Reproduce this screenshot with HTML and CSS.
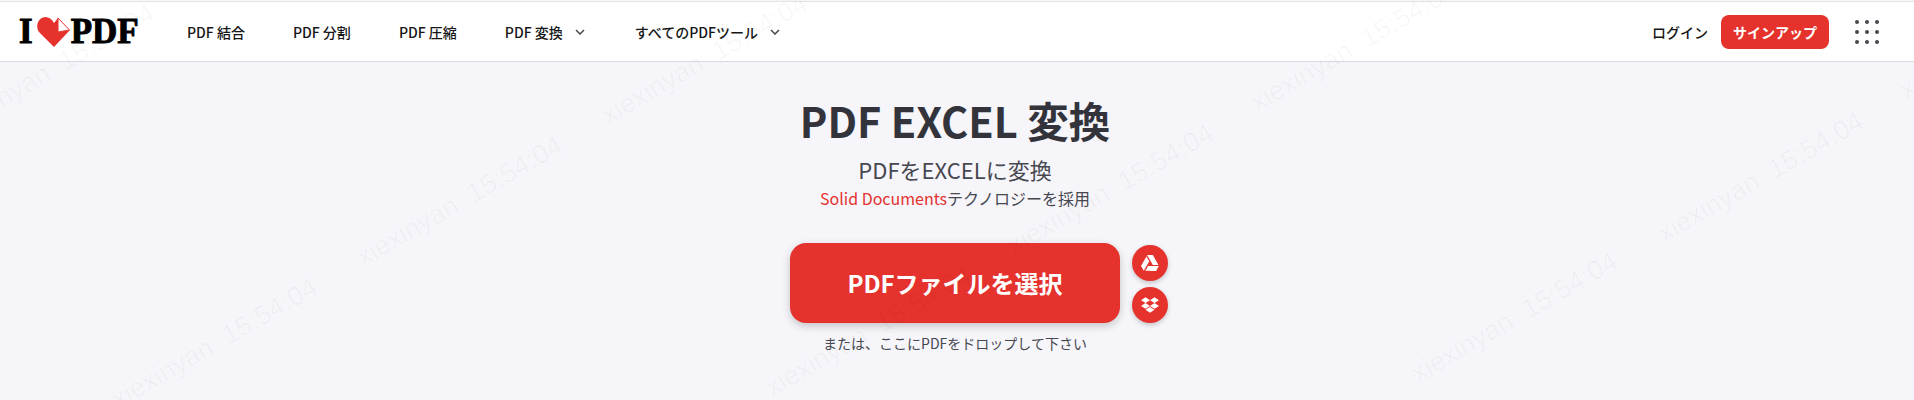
FILE: index.html
```html
<!DOCTYPE html>
<html lang="ja">
<head>
    <meta charset="UTF-8">
    <meta name="viewport" content="width=device-width, initial-scale=1.0">
    <title>PDF EXCEL 変換</title>
    <link rel="stylesheet" href="styles.css">
</head>
<body>
    <header class="topbar">
        <a class="logo" href="#">
            <span>I</span>
            <svg class="logo-heart" viewBox="0 0 33 30" width="33" height="30">
                <path fill="#e5322d" d="M17 30 L2 15 C-2 9 1 1 8 0 C12 0 15 2 17 6 L21 1 L21 15 L33 13 Z"/>
                <path fill="#fff" stroke="#e5322d" stroke-width="1" d="M21 1 L32.5 13 L21 15 Z"/>
            </svg>
            <span>PDF</span>
        </a>
        <nav class="main-nav">
            <a href="#">PDF 結合</a>
            <a href="#">PDF 分割</a>
            <a href="#">PDF 圧縮</a>
            <a href="#" class="has-menu">PDF 変換
                <svg class="chevron" viewBox="0 0 10 6" width="10" height="6"><path d="M1 1l4 4 4-4" fill="none" stroke="#47474f" stroke-width="1.5"/></svg>
            </a>
            <a href="#" class="has-menu">すべてのPDFツール
                <svg class="chevron" viewBox="0 0 10 6" width="10" height="6"><path d="M1 1l4 4 4-4" fill="none" stroke="#47474f" stroke-width="1.5"/></svg>
            </a>
        </nav>
        <div class="account">
            <a href="#" class="login">ログイン</a>
            <a href="#" class="signup">サインアップ</a>
            <div class="apps">
                <i></i><i></i><i></i>
                <i></i><i></i><i></i>
                <i></i><i></i><i></i>
            </div>
        </div>
    </header>

    <main class="tool">
        <h1>PDF EXCEL 変換</h1>
        <h2>PDFをEXCELに変換</h2>
        <p class="powered"><span class="brand">Solid Documents</span>テクノロジーを採用</p>
        <div class="uploader">
            <a href="#" class="pick-btn">PDFファイルを選択</a>
            <div class="cloud-btns">
                <a href="#" class="cloud-btn">
                    <svg viewBox="0 0 24 24" width="18" height="18"><path fill="#fff" d="M12.01 1.485c-2.082 0-3.754.02-3.743.047.01.02 1.708 3.001 3.774 6.62l3.76 6.574h3.76c2.081 0 3.753-.02 3.742-.047-.005-.02-1.708-3.001-3.775-6.62l-3.76-6.574zm-4.76 1.73a789.828 789.861 0 0 0-3.63 6.319L0 15.868l1.89 3.298 1.885 3.297 3.62-6.335 3.618-6.33-1.88-3.287C8.1 4.704 7.255 3.22 7.25 3.214zm2.259 12.653-.203.348c-.114.198-.96 1.672-1.88 3.287a423.93 423.948 0 0 1-1.698 2.97c-.01.026 3.24.042 7.222.042h7.244l1.796-3.157c.992-1.734 1.85-3.23 1.906-3.323l.104-.167h-7.249z"/></svg>
                </a>
                <a href="#" class="cloud-btn">
                    <svg viewBox="0 0 24 24" width="18" height="18"><path fill="#fff" d="M6 1.807L0 5.629l6 3.822 6.001-3.822L6 1.807zM18 1.807l-6 3.822 6 3.822 6-3.822-6-3.822zM0 13.274l6 3.822 6.001-3.822L6 9.452l-6 3.822zM18 9.452l-6 3.822 6 3.822 6-3.822-6-3.822zM6 18.371l6.001 3.822 6-3.822-6-3.822L6 18.371z"/></svg>
                </a>
            </div>
        </div>
        <p class="drop-hint">または、ここにPDFをドロップして下さい</p>
    </main>

    <!-- watermark lies over the whole page -->
    <svg class="watermark" width="1914" height="400">
        <text x="-45" y="135" transform="rotate(-30 -45 135)">xiexinyan&#160;&#160;15:54:04</text>
        <text x="118" y="409" transform="rotate(-30 118 409)">xiexinyan&#160;&#160;15:54:04</text>
        <text x="363" y="267" transform="rotate(-30 363 267)">xiexinyan&#160;&#160;15:54:04</text>
        <text x="608" y="125" transform="rotate(-30 608 125)">xiexinyan&#160;&#160;15:54:04</text>
        <text x="772" y="397" transform="rotate(-30 772 397)">xiexinyan&#160;&#160;15:54:04</text>
        <text x="1014" y="255" transform="rotate(-30 1014 255)">xiexinyan&#160;&#160;15:54:04</text>
        <text x="1257" y="112" transform="rotate(-30 1257 112)">xiexinyan&#160;&#160;15:54:04</text>
        <text x="1418" y="383" transform="rotate(-30 1418 383)">xiexinyan&#160;&#160;15:54:04</text>
        <text x="1664" y="243" transform="rotate(-30 1664 243)">xiexinyan&#160;&#160;15:54:04</text>
        <text x="1906" y="100" transform="rotate(-30 1906 100)">xiexinyan&#160;&#160;15:54:04</text>
    </svg>
</body>
</html>
```

FILE: styles.css
```css
html, body {
    height: 100%;
}
body {
    margin: 0;
    position: relative;
    overflow: hidden;
    background-color: #f5f5fa;
    color: #33333b;
    font-family: "Noto Sans CJK JP", "Noto Sans", sans-serif;
}
a {
    text-decoration: none;
    color: inherit;
}

/* top bar */
.topbar {
    display: flex;
    align-items: center;
    height: 59px;
    margin-top: 1px;
    padding: 0 35px 0 19px;
    background-color: white;
    border-top: 1px solid #e3e3e6;
    border-bottom: 1px solid #d9d9de;
}
.logo {
    display: flex;
    align-items: center;
    width: 168px;
    color: black;
    font-family: "Liberation Serif", serif;
    font-size: 35px;
    font-weight: bold;
    line-height: 1;
    -webkit-text-stroke: 1px black;
}
.logo-heart {
    margin: 0 1px 0 4px;
}
.main-nav {
    display: flex;
    align-items: center;
    font-size: 14px;
    font-weight: 500;
    color: #161616;
}
.main-nav a {
    margin-right: 48px;
}
.has-menu {
    display: flex;
    align-items: center;
}
.main-nav .has-menu {
    margin-right: 50px;
}
.chevron {
    margin-left: 12px;
}
.account {
    display: flex;
    align-items: center;
    margin-left: auto;
}
.login {
    font-size: 14px;
    font-weight: 500;
    color: #161616;
}
.signup {
    display: block;
    margin-left: 13px;
    padding: 0 12px;
    height: 34px;
    line-height: 34px;
    border-radius: 8px;
    background-color: #e5322d;
    color: white;
    font-size: 14px;
    font-weight: 700;
}
.apps {
    display: grid;
    grid-template-columns: repeat(3, 4px);
    gap: 6px;
    margin-left: 26px;
}
.apps i {
    width: 4px;
    height: 4px;
    border-radius: 50%;
    background-color: #47474f;
}

/* tool header and upload */
.tool {
    display: flex;
    flex-direction: column;
    align-items: center;
    padding: 33px 4px 0 0;
}
h1 {
    margin: 0;
    font-size: 41.5px;
    line-height: 50px;
    font-weight: 600;
    color: #33333b;
}
h2 {
    margin: 8px 0 0;
    font-size: 22px;
    line-height: 32px;
    font-weight: 400;
    color: #47474f;
}
.powered {
    margin: 1px 0 0;
    font-size: 16px;
    line-height: 24px;
    color: #47474f;
}
.brand {
    color: #e5322d;
}
.uploader {
    display: grid;
    grid-template-columns: 1fr 330px 1fr;
    column-gap: 12px;
    align-items: center;
    width: 100%;
    margin-top: 33px;
}
.pick-btn {
    grid-column: 2;
    display: block;
    height: 80px;
    line-height: 80px;
    border-radius: 16px;
    background-color: #e5322d;
    box-shadow: 0 3px 8px rgba(0, 0, 0, 0.2);
    color: white;
    font-size: 24px;
    font-weight: 700;
    text-align: center;
}
.cloud-btns {
    display: flex;
    flex-direction: column;
    gap: 6px;
    padding-top: 2px;
}
.cloud-btn {
    display: flex;
    align-items: center;
    justify-content: center;
    width: 36px;
    height: 36px;
    border-radius: 50%;
    background-color: #e5322d;
    box-shadow: 0 2px 5px rgba(0, 0, 0, 0.2);
}
.drop-hint {
    margin: 9px 0 0;
    font-size: 14px;
    line-height: 22px;
    color: #47474f;
}

.watermark {
    position: absolute;
    left: 0;
    top: 0;
    pointer-events: none;
}
.watermark text {
    font-family: "Liberation Sans", sans-serif;
    font-size: 27px;
    fill: rgba(0, 0, 0, 0.03);
}
```
